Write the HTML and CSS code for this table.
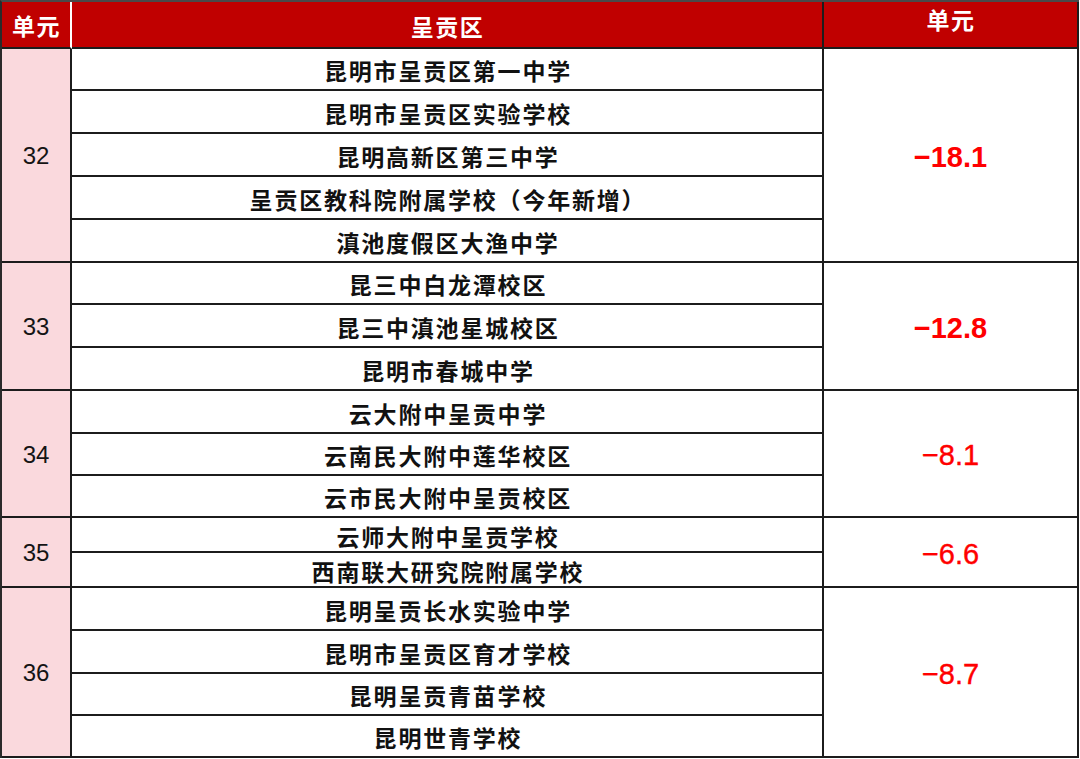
FILE: index.html
```html
<!DOCTYPE html>
<html lang="zh-CN">
<head>
<meta charset="utf-8">
<title>呈贡区</title>
<link rel="stylesheet" href="styles.css">
</head>
<body>
<div class="sheet">
  <div class="hd hd-unit">单元</div>
  <div class="hd hd-area">呈贡区</div>
  <div class="hd hd-val">单元</div>

  <div class="num span5">32</div>
  <div class="school">昆明市呈贡区第一中学</div>
  <div class="val span5 strong">−18.1</div>
  <div class="school">昆明市呈贡区实验学校</div>
  <div class="school">昆明高新区第三中学</div>
  <div class="school">呈贡区教科院附属学校（今年新增）</div>
  <div class="school">滇池度假区大渔中学</div>

  <div class="num span3">33</div>
  <div class="school">昆三中白龙潭校区</div>
  <div class="val span3 strong">−12.8</div>
  <div class="school">昆三中滇池星城校区</div>
  <div class="school">昆明市春城中学</div>

  <div class="num span3">34</div>
  <div class="school">云大附中呈贡中学</div>
  <div class="val span3">−8.1</div>
  <div class="school">云南民大附中莲华校区</div>
  <div class="school">云市民大附中呈贡校区</div>

  <div class="num span2">35</div>
  <div class="school">云师大附中呈贡学校</div>
  <div class="val span2">−6.6</div>
  <div class="school">西南联大研究院附属学校</div>

  <div class="num span4">36</div>
  <div class="school">昆明呈贡长水实验中学</div>
  <div class="val span4">−8.7</div>
  <div class="school">昆明市呈贡区育才学校</div>
  <div class="school">昆明呈贡青苗学校</div>
  <div class="school">昆明世青学校</div>
</div>
</body>
</html>
```

FILE: styles.css
```css
html, body {
  margin: 0;
  padding: 0;
  background: #ffffff;
}

body {
  width: 1080px;
  height: 759px;
  overflow: hidden;
}

.sheet {
  box-sizing: border-box;
  width: 1079px;
  display: grid;
  grid-template-columns: 70px 752px 1fr;
  grid-template-rows: 47px 42px 43px 43px 43px 43px 42px 43px 43px 43px 42px 42px 35px 35px 43px 43px 42px 42px;
  border-top: 2px solid #4a4a4a;
  border-left: 2px solid #2a2a2a;
  font-family: "Noto Sans CJK SC", "Liberation Sans", sans-serif;
}

.sheet > div {
  box-sizing: border-box;
  border-right: 2px solid #1c1c1c;
  border-bottom: 2px solid #1c1c1c;
  display: flex;
  align-items: center;
  justify-content: center;
}

.hd {
  background: #c00000;
  color: #ffffff;
  font-weight: 700;
  font-size: 23px;
  letter-spacing: 1.5px;
  padding-left: 1px;
}

.hd-unit {
  grid-column: 1;
  border-right-color: #ffffff !important;
}

.hd-area {
  grid-column: 2;
  padding-top: 2px;
}

.hd-val {
  grid-column: 3;
  align-items: flex-start !important;
  padding-top: 0;
}

.num {
  grid-column: 1;
  background: #fad9dd;
  font-family: "Liberation Sans", Arial, sans-serif;
  font-size: 24px;
  color: #141414;
  padding-top: 2px;
}

.school {
  grid-column: 2;
  font-weight: 700;
  font-size: 23px;
  letter-spacing: 1.8px;
  padding-left: 2px;
  padding-top: 2px;
  color: #111111;
}

.val {
  grid-column: 3;
  font-family: "Liberation Sans", Arial, sans-serif;
  font-size: 29px;
  color: #ff0000;
  padding-top: 4px;
  -webkit-text-stroke: 0.4px #ff0000;
}

.val.strong {
  font-weight: 700;
  -webkit-text-stroke: 0;
}

.span2 { grid-row: span 2; }
.span3 { grid-row: span 3; }
.span4 { grid-row: span 4; }
.span5 { grid-row: span 5; }
```
